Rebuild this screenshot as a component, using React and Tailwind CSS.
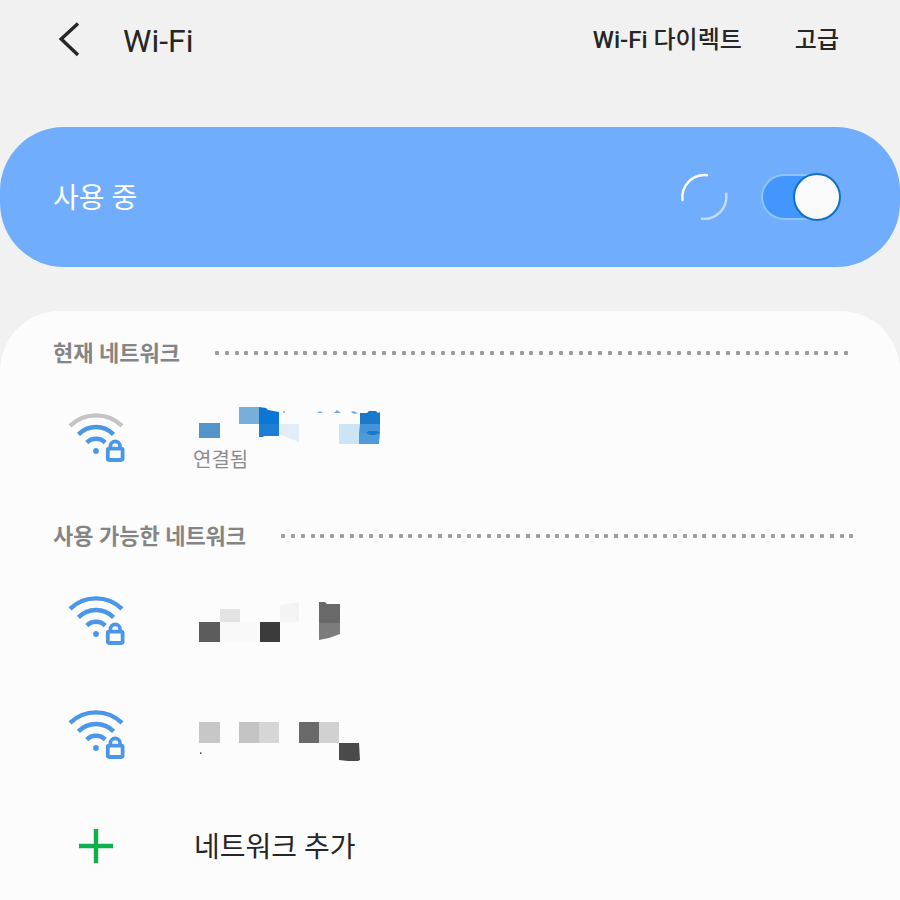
import React, { useState } from 'react';

const currentBlocks = [
  { points: '6,23 27,23 27,38 6,38', fill: '#5395cb' },
  { points: '46,7 67,7 67,24 46,24', fill: '#78aeda' },
  { points: '66,7 73,8 75,10 86,12 86,24 66,24', fill: '#0b76d3' },
  { points: '66,24 86,24 86,36 71,36 70,37 66,37', fill: '#1c7fd6' },
  { points: '86,24 106,24 106,42 86,34', fill: '#e3edf7' },
  { points: '146,24 167,24 167,44 146,44', fill: '#cbe5f4' },
  { points: '167,13 174,13 176,11 183,11 185,13 187,12 187,24 167,24', fill: '#1b79cb' },
  { points: '167,24 187,24 187,33 166,33', fill: '#4394d8' },
  { points: '166,33 187,33 186,44 166,44', fill: '#4d9bdb' },
  { points: '173,33 176,31 184,31 187,33 182,35 177,35', fill: '#1b79cb' },
  { points: '124,13 127,11 130,13', fill: '#73abda' },
  { points: '141,13 144,10 148,13', fill: '#73abda' },
  { points: '158,12 160,11 165,13 161,14', fill: '#73abda' },
  { points: '90,11 92,11 92,13 90,13', fill: '#9cc0dc' },
];

const firstBlocks = [
  { points: '6,29 27,29 27,49 6,49', fill: '#5c5c5c' },
  { points: '27,16 47,16 47,29 27,29', fill: '#e3e3e3' },
  { points: '27,29 67,29 67,49 27,49', fill: '#f9f9f9' },
  { points: '67,29 87,29 87,49 67,49', fill: '#3b3b3b' },
  { points: '87,12 106,9 106,29 87,29', fill: '#f4f4f4' },
  { points: '126,9 132,9 134,11 147,11 147,30 126,30', fill: '#696969' },
  { points: '126,30 147,30 147,41 136,45 126,47', fill: '#7c7c7c' },
];

const secondBlocks = [
  { points: '6,15 27,15 27,36 6,36', fill: '#c7c7c7' },
  { points: '46,15 66,15 66,36 46,36', fill: '#c3c3c3' },
  { points: '66,15 86,15 86,36 66,36', fill: '#d6d6d6' },
  { points: '106,15 126,15 126,36 106,36', fill: '#696969' },
  { points: '126,15 146,15 146,36 126,36', fill: '#d1d1d1' },
  { points: '146,36 166,36 167,53 165,54 155,54 146,53', fill: '#4a4a4a' },
  { points: '7,45 9,46 8,47 7,47', fill: '#555555' },
];

// Network names are masked, only coloured blocks are shown
const MaskedName = ({ blocks, height }) => (
  <svg width="200" height={height} viewBox={`0 0 200 ${height}`} className="block" aria-hidden="true">
    {blocks.map(block => (
      <polygon key={block.points} points={block.points} fill={block.fill} />
    ))}
  </svg>
);

const WifiLockIcon = ({ weak }) => (
  <svg width="58" height="52" viewBox="0 0 58 52" fill="none" stroke="#4a97ea" strokeWidth="4.4" className="shrink-0" aria-hidden="true">
    <path d="M2 13.9A37.5 37.5 0 0 1 54 13.9" stroke={weak ? '#c4c4c4' : '#4a97ea'} />
    <path d="M10.4 22.4A24.5 24.5 0 0 1 45.6 22.4" />
    <path d="M18.8 30.6A13 13 0 0 1 37.2 30.6" />
    <circle cx="28" cy="39" r="2.9" fill="#4a97ea" stroke="none" />
    <rect x="39.8" y="36.6" width="14.8" height="11.4" rx="1.4" strokeWidth="3.8" />
    <path d="M42.4 36.6v-2.4a4.8 4.8 0 0 1 9.6 0v2.4" strokeWidth="3.6" />
  </svg>
);

const SectionHeading = ({ title, dots, lineClass }) => (
  <div className="flex h-14 items-center gap-[35px] pl-[53px] pr-[46px]">
    <h2 className="pt-0.5 text-[22px] leading-8 font-bold whitespace-nowrap text-[#858585]">{title}</h2>
    <div className={`flex flex-1 justify-between overflow-hidden ${lineClass}`}>
      {Array.from({ length: dots }, (_, i) => (
        <span key={i} className="h-1 w-1 rounded-[1px] bg-[#9c9c9c]" />
      ))}
    </div>
  </div>
);

const NetworkRow = ({ weak, blocks, height, status }) => (
  <li>
    <button type="button" className="flex h-[114px] w-full items-center gap-[67px] pl-[68px] text-left">
      <WifiLockIcon weak={weak} />
      <span className="block">
        <MaskedName blocks={blocks} height={height} />
        {status && <span className="block text-[20px] leading-8 text-[#8c8c8c]">{status}</span>}
      </span>
    </button>
  </li>
);

const App = () => {
  const [enabled, setEnabled] = useState(true);

  return (
    <div className="flex min-h-screen flex-col bg-[#f1f1f1] font-['Roboto','Noto_Sans_CJK_KR',sans-serif] text-[#262626]">
      <header className="flex h-20 items-center pl-[57px] pr-[61px]">
        <button type="button" aria-label="뒤로" className="mr-[42px]">
          <svg width="24" height="36" viewBox="0 0 24 36" fill="none" stroke="#262626" strokeWidth="3.4" className="block">
            <path d="M21 1.5L4.2 17L21 33" />
          </svg>
        </button>
        <h1 className="pt-0.5 text-[32px] leading-10">Wi-Fi</h1>
        <nav className="ml-auto flex gap-[53px] text-[24px] leading-10 font-medium">
          <button type="button">Wi-Fi 다이렉트</button>
          <button type="button">고급</button>
        </nav>
      </header>

      <section className="mt-[47px] flex h-[140px] items-center rounded-[64px] bg-[#70adfd] pl-[53px] pr-[59px]">
        <label htmlFor="wifi-switch" className="flex-1 pt-1 text-[28px] leading-10 text-white">사용 중</label>
        <svg width="46" height="46" viewBox="0 0 46 46" fill="none" stroke="#ffffff" strokeWidth="2.4" strokeLinecap="round" className="mr-[34px] overflow-visible" aria-hidden="true">
          <path d="M1.5 26A22.3 22.3 0 0 1 26 1.2" />
          <path d="M45.2 19.8A22.3 22.3 0 0 1 21 44.8" opacity="0.6" />
        </svg>
        <div className="relative flex h-12 w-20 items-center">
          <input
            id="wifi-switch"
            type="checkbox"
            role="switch"
            checked={enabled}
            onChange={e => setEnabled(e.target.checked)}
            className="peer h-[46px] w-20 appearance-none rounded-full border-2 border-[#8fc4fb] bg-[#8fc4fb] checked:bg-[#4296fe]"
          />
          <span className="pointer-events-none absolute top-0 left-0 h-12 w-12 rounded-full border-2 border-[#0f70c8] bg-[#fafafa] peer-checked:left-8" />
        </div>
      </section>

      <main className="mt-11 flex-1 rounded-t-[60px] bg-[#fcfcfc] pt-3.5">
        <SectionHeading title="현재 네트워크" dots={65} lineClass="mr-1.5" />
        <ul>
          <NetworkRow weak blocks={currentBlocks} height={44} status="연결됨" />
        </ul>

        <div className="pt-[13px]">
          <SectionHeading title="사용 가능한 네트워크" dots={59} lineClass="" />
          <ul>
            <NetworkRow blocks={firstBlocks} height={56} />
            <NetworkRow blocks={secondBlocks} height={56} />
          </ul>
        </div>

        <button type="button" className="flex h-[108px] w-full items-center gap-20 pl-[78px]">
          <svg width="36" height="36" viewBox="0 0 36 36" stroke="#0fb04c" strokeWidth="4.4" aria-hidden="true">
            <path d="M18 1v34M1 18h34" />
          </svg>
          <span className="pt-1 text-[28px] leading-10">네트워크 추가</span>
        </button>
      </main>
    </div>
  );
};

export default App;
